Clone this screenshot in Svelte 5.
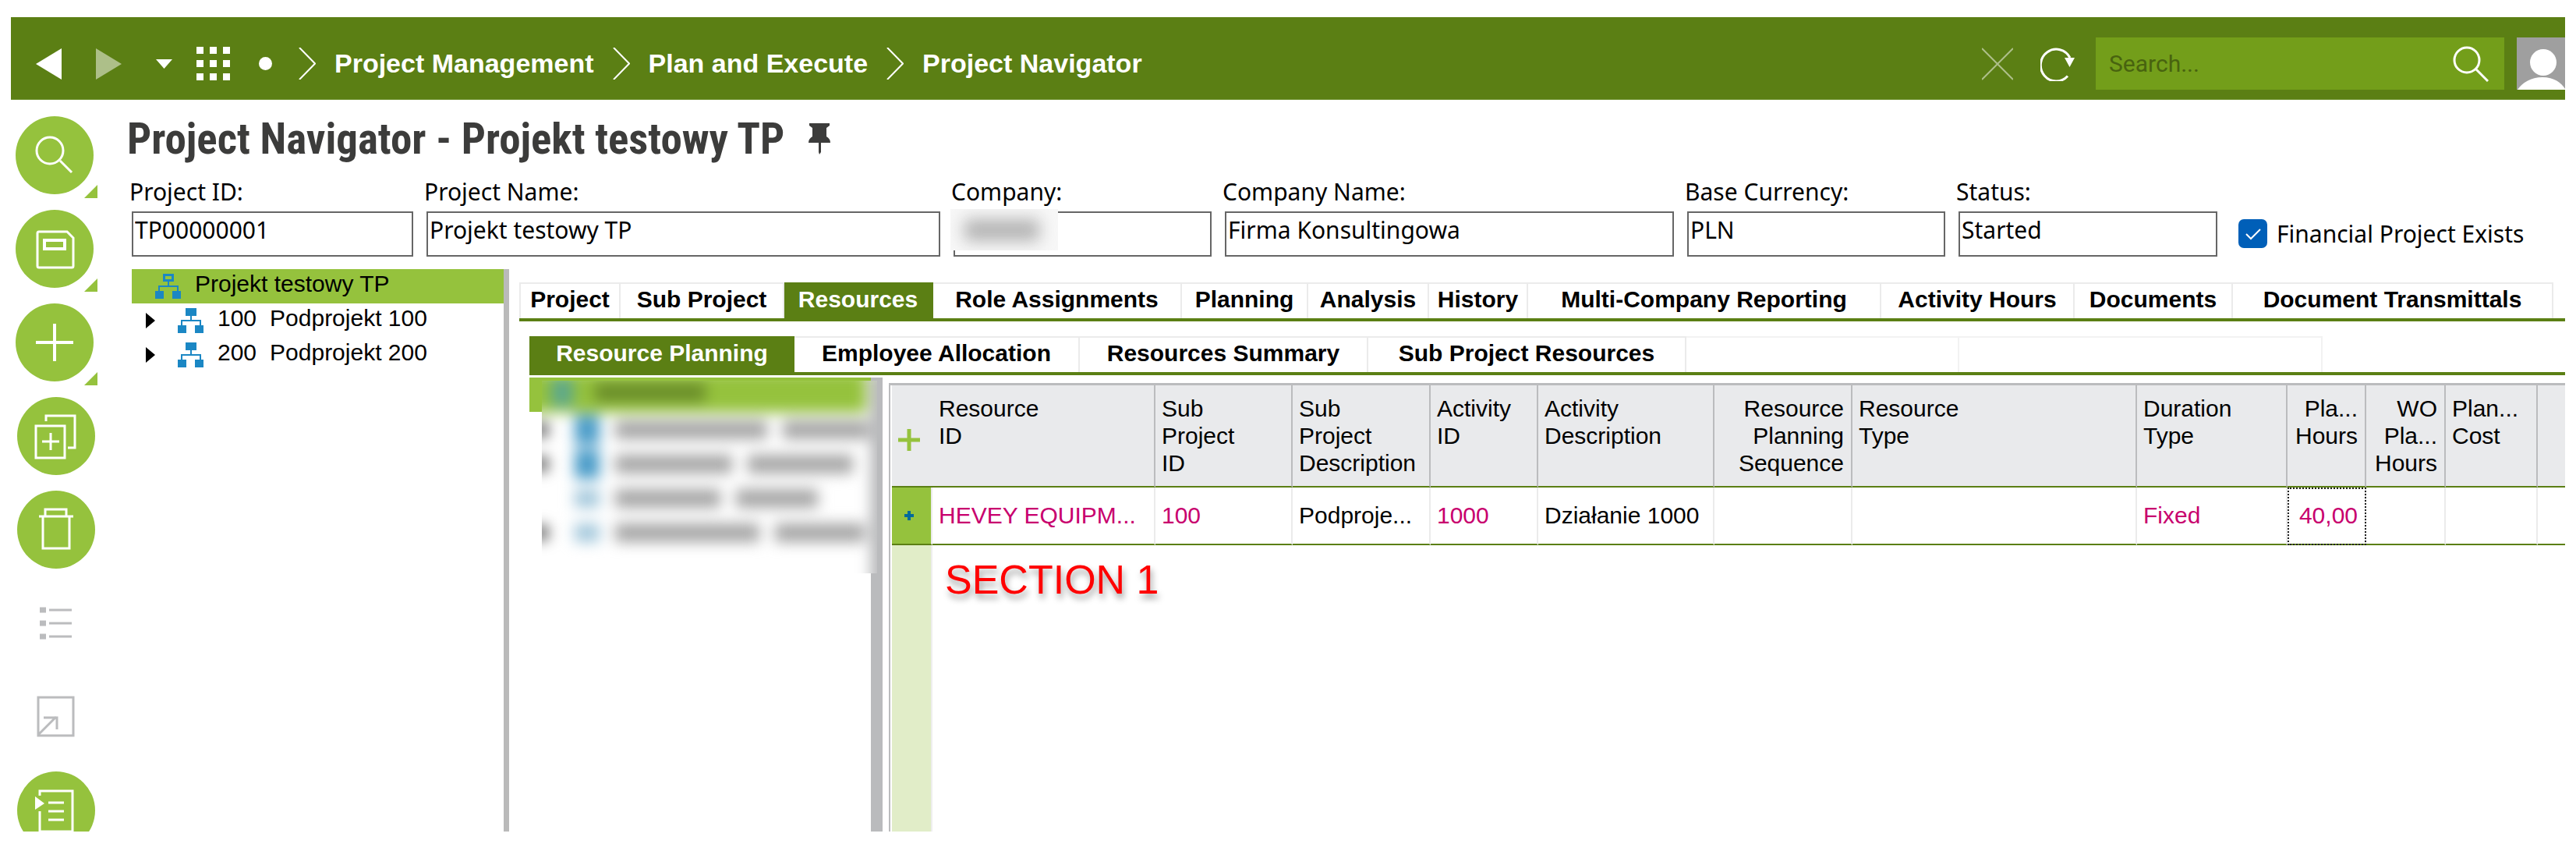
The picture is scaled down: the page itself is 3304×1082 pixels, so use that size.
<script lang="ts">
	interface Field {
		id: string;
		label: string;
		value: string;
		hidden?: boolean;
	}

	interface Tab {
		label: string;
		width: number;
	}

	interface Column {
		title: string[];
		width: number;
		value: string;
		align?: 'right';
		link?: boolean;
		focused?: boolean;
	}

	const crumbs = ['Project Management', 'Plan and Execute', 'Project Navigator'];

	const fields: Field[] = [
		{ id: 'project-id', label: 'Project ID:', value: 'TP00000001' },
		{ id: 'project-name', label: 'Project Name:', value: 'Projekt testowy TP' },
		{ id: 'company', label: 'Company:', value: '', hidden: true },
		{ id: 'company-name', label: 'Company Name:', value: 'Firma Konsultingowa' },
		{ id: 'currency', label: 'Base Currency:', value: 'PLN' },
		{ id: 'status', label: 'Status:', value: 'Started' }
	];

	const subProjects = [
		{ id: '100', name: 'Podprojekt 100' },
		{ id: '200', name: 'Podprojekt 200' }
	];

	const tabs: Tab[] = [
		{ label: 'Project', width: 130 },
		{ label: 'Sub Project', width: 210 },
		{ label: 'Resources', width: 191 },
		{ label: 'Role Assignments', width: 319 },
		{ label: 'Planning', width: 162 },
		{ label: 'Analysis', width: 155 },
		{ label: 'History', width: 127 },
		{ label: 'Multi-Company Reporting', width: 453 },
		{ label: 'Activity Hours', width: 248 },
		{ label: 'Documents', width: 203 },
		{ label: 'Document Transmittals', width: 411 }
	];

	const subTabs: Tab[] = [
		{ label: 'Resource Planning', width: 340 },
		{ label: 'Employee Allocation', width: 366 },
		{ label: 'Resources Summary', width: 370 },
		{ label: 'Sub Project Resources', width: 408 }
	];

	const columns: Column[] = [
		{ title: ['Resource', 'ID'], width: 286, value: 'HEVEY EQUIPM...', link: true },
		{ title: ['Sub', 'Project', 'ID'], width: 176, value: '100', link: true },
		{ title: ['Sub', 'Project', 'Description'], width: 177, value: 'Podproje...' },
		{ title: ['Activity', 'ID'], width: 138, value: '1000', link: true },
		{ title: ['Activity', 'Description'], width: 226, value: 'Działanie 1000' },
		{ title: ['Resource', 'Planning', 'Sequence'], width: 177, value: '', align: 'right' },
		{ title: ['Resource', 'Type'], width: 365, value: '' },
		{ title: ['Duration', 'Type'], width: 193, value: 'Fixed', link: true },
		{ title: ['Pla...', 'Hours'], width: 101, value: '40,00', align: 'right', link: true, focused: true },
		{ title: ['WO', 'Pla...', 'Hours'], width: 102, value: '', align: 'right' },
		{ title: ['Plan...', 'Cost'], width: 118, value: '' }
	];

	// widths of the masked id and name in each row of the resource tree
	const maskedRows = [
		{ arrow: true, person: true, id: 195, name: 110 },
		{ arrow: true, person: true, id: 150, name: 135 },
		{ arrow: false, person: false, id: 135, name: 105 },
		{ arrow: true, person: false, id: 185, name: 115 }
	];

	let activeTab = $state('Resources');
	let activeSubTab = $state('Resource Planning');
	let financial = $state(true);
</script>

{#snippet hierarchy(open: boolean)}
	<svg class="node-icon" width="34" height="34" viewBox="0 0 34 34" fill="#1b87c4" aria-hidden="true">
		{#if open}
			<path fill-rule="evenodd" d="M11 1h14v10H11zM14 4v4h8V4z" />
		{:else}
			<path d="M11 1h14v10H11z" />
		{/if}
		<path d="M17 11h2v5h12v7h-2v-5H7v5H5v-7h12z" />
		<path d="M1 23h11v10H1zM23 23h11v10H23z" />
	</svg>
{/snippet}

<div class="app">
	<header>
		<nav class="history">
			<button aria-label="Back"><svg width="33" height="40" viewBox="0 0 33 40"><path d="M33 0v40L0 20z" fill="#fff" /></svg></button>
			<button aria-label="Forward"><svg width="33" height="40" viewBox="0 0 33 40"><path d="M0 0v40l33-20z" fill="#adbf89" /></svg></button>
			<button aria-label="Recent pages"><svg width="21" height="12" viewBox="0 0 21 12"><path d="M0 0h21L10.500 12z" fill="#fff" /></svg></button>
		</nav>
		<button class="apps" aria-label="Navigator">
			<svg width="43" height="43" viewBox="0 0 43 43" fill="#fff">
				{#each [0, 17, 34] as y}
					{#each [0, 17, 34] as x}
						<rect {x} {y} width="9" height="9" />
					{/each}
				{/each}
			</svg>
		</button>
		<span class="dot"></span>
		<nav class="crumbs">
			{#each crumbs as crumb}
				<svg width="22" height="41" viewBox="0 0 22 41" fill="none" stroke="#fff" stroke-width="2"><path d="M1 0l20 20.500L1 41" /></svg>
				<a href="#top">{crumb}</a>
			{/each}
		</nav>
		<div class="tools">
			<button aria-label="Stop"><svg width="40" height="42" viewBox="0 0 40 42" fill="none" stroke="#adbf89" stroke-width="2"><path d="M0 1l40 40M40 1L0 41" /></svg></button>
			<button aria-label="Refresh">
				<svg width="44" height="44" viewBox="0 0 44 44" fill="none" stroke="#fff" stroke-width="3">
					<path d="M35 37.500A20 20.500 0 1 1 38 14" />
					<path d="M31 14h13l-6.500 12z" fill="#fff" stroke="none" />
				</svg>
			</button>
		</div>
		<div class="search">
			<input type="text" placeholder="Search..." aria-label="Search" />
			<button aria-label="Run search">
				<svg width="46" height="46" viewBox="0 0 46 46" fill="none" stroke="#fff" stroke-width="3"><circle cx="18" cy="18" r="16" /><path d="M29 29l16 16" /></svg>
			</button>
		</div>
		<div class="avatar">
			<svg width="62" height="67" viewBox="0 0 62 67" fill="#fff" aria-hidden="true"><circle cx="34" cy="32" r="17" /><path d="M1 67C7 58 18 51 33 51s24 7 29 15v1z" /></svg>
		</div>
	</header>

	<div class="body">
		<aside>
			<button class="round has-menu" aria-label="Search">
				<svg viewBox="0 0 100 100"><circle cx="44" cy="44" r="17" /><path d="M57 57l15 15" /></svg>
			</button>
			<button class="round has-menu" aria-label="Save">
				<svg viewBox="0 0 100 100"><path d="M30 28h36l8 8v36a2 2 0 0 1-2 2H30a2 2 0 0 1-2-2V30a2 2 0 0 1 2-2z" /><path d="M37 39h26v11H37z" stroke-width="4" /></svg>
			</button>
			<button class="round has-menu" aria-label="New">
				<svg viewBox="0 0 100 100"><path d="M26 50h48M50 26v48" stroke-width="4" /></svg>
			</button>
			<button class="round inset" aria-label="Duplicate">
				<svg viewBox="0 0 100 100"><path d="M24 37h37v41H24z" /><path d="M37 31v-7h37v41h-9M32 57h22M43 46v22" /></svg>
			</button>
			<button class="round inset" aria-label="Delete">
				<svg viewBox="0 0 100 100"><path d="M28 33h44M36 33v-9h27v9M33 33v41h34V33" /></svg>
			</button>
			<button class="plain" aria-label="List" disabled>
				<svg viewBox="0 0 100 100"><path d="M41 33h29M41 50h29M41 67h29" /><path d="M29 33h8M29 50h8M29 67h8" stroke-width="7" /></svg>
			</button>
			<button class="plain" aria-label="Open" disabled>
				<svg viewBox="0 0 100 100"><path d="M27 25h45v49H27zM27 73l23-23M34 51h17v15" /></svg>
			</button>
			<button class="round inset" aria-label="Details">
				<svg viewBox="0 0 100 100"><path d="M29 31v-6h42v52H29V51" /><path d="M40 40h20M40 51h20M40 62h20" /><path d="M23 32v17l12-8z" fill="#fff" stroke="none" /></svg>
			</button>
		</aside>

		<main>
			<h1>
				Project Navigator - Projekt testowy TP
				<svg width="30" height="40" viewBox="0 0 30 40" fill="#3c3c3b" aria-hidden="true"><path d="M2 0h26v3l-4 3v11c3 2 5 4 5 8H17v12l-2 3-1-3V25H1c0-4 2-6 5-8V6L2 3z" /></svg>
			</h1>

			<form class="fields">
				{#each fields as field (field.id)}
					<div class="field">
						<label for={field.id}>{field.label}</label>
						<input id={field.id} type="text" value={field.value} readonly />
						{#if field.hidden}
							<span class="mask"><i></i></span>
						{/if}
					</div>
				{/each}
				<label class="check">
					<input type="checkbox" bind:checked={financial} />
					Financial Project Exists
				</label>
			</form>

			<div class="panels">
				<div class="tree">
					<div class="tree-row selected">{@render hierarchy(true)}<span>Projekt testowy TP</span></div>
					{#each subProjects as sub (sub.id)}
						<div class="tree-row child">
							<svg class="arrow" width="12" height="20" viewBox="0 0 12 20" aria-hidden="true"><path d="M0 0l12 10L0 20z" /></svg>
							{@render hierarchy(false)}
							<span>{sub.id}</span>
							<span class="name">{sub.name}</span>
						</div>
					{/each}
				</div>

				<div class="workspace">
					<div class="tabs" role="tablist">
						{#each tabs as tab (tab.label)}
							<button
								role="tab"
								aria-selected={tab.label === activeTab}
								class:active={tab.label === activeTab}
								style="width:{tab.width}px"
								onclick={() => (activeTab = tab.label)}>{tab.label}</button>
						{/each}
					</div>

					<div class="inner">
						<div class="tabs" role="tablist">
							{#each subTabs as tab (tab.label)}
								<button
									role="tab"
									aria-selected={tab.label === activeSubTab}
									class:active={tab.label === activeSubTab}
									style="width:{tab.width}px"
									onclick={() => (activeSubTab = tab.label)}>{tab.label}</button>
							{/each}
							<span class="filler"></span>
							<span class="filler end"></span>
						</div>

						<div class="split">
							<div class="resource-tree">
								<div class="tree-row selected"></div>
								<div class="masked" aria-hidden="true">
									<div class="masked-body">
										<div class="masked-row top"><i class="roof"></i><i class="title"></i></div>
										{#each maskedRows as row}
											<div class="masked-row">
												<i class="tick" class:off={!row.arrow}></i>
												<i class="person" class:light={!row.person}></i>
												<i class="bar" style="width:{row.id}px"></i>
												<i class="bar" style="width:{row.name}px"></i>
											</div>
										{/each}
									</div>
								</div>
							</div>

							<div class="grid">
								<table>
									<colgroup>
										<col class="add-col" />
										{#each columns as col}
											<col style="width:{col.width}px" />
										{/each}
										<col />
									</colgroup>
									<thead>
										<tr>
											<th class="add"><button aria-label="Add row"><svg width="28" height="28" viewBox="0 0 28 28" stroke="#95c23d" stroke-width="5"><path d="M0 14h28M14 0v28" /></svg></button></th>
											{#each columns as col}
												<th class:right={col.align === 'right'}>
													{#each col.title as line}<span>{line}</span>{/each}
												</th>
											{/each}
											<th></th>
										</tr>
									</thead>
									<tbody>
										<tr>
											<td class="mark"><svg width="12" height="12" viewBox="0 0 12 12" stroke="#006a9c" stroke-width="4" aria-hidden="true"><path d="M0 6h12M6 0v12" /></svg></td>
											{#each columns as col}
												<td class:right={col.align === 'right'} class:link={col.link} class:focused={col.focused}>{col.value}</td>
											{/each}
											<td></td>
										</tr>
									</tbody>
								</table>
								<div class="rest">
									<div class="gutter"></div>
									<p>SECTION 1</p>
								</div>
							</div>
						</div>
					</div>
				</div>
			</div>
		</main>
	</div>
</div>

<style>
	:global(body) {
		background: #fff;
	}
	* {
		box-sizing: border-box;
	}
	.app {
		display: flex;
		flex-direction: column;
		height: 100vh;
		padding: 22px 14px 16px;
		overflow: hidden;
		background: #fff;
		color: #000;
		font-family: 'Liberation Sans', Arial, sans-serif;
		font-size: 30px;
	}
	svg {
		display: block;
		flex: none;
	}
	button {
		padding: 0;
		border: 0;
		background: none;
		font: inherit;
		color: inherit;
	}

	/* top bar */
	header {
		display: flex;
		flex: none;
		align-items: center;
		padding: 26px 0 12px 32px;
		border-bottom: 1px solid #6f9130;
		background: #5b7f14;
	}
	.history {
		display: flex;
		align-items: center;
		gap: 44px;
	}
	.apps {
		margin-left: 31px;
	}
	.dot {
		width: 17px;
		height: 17px;
		margin: 0 34px 0 37px;
		border-radius: 50%;
		background: #fff;
	}
	.crumbs {
		display: flex;
		align-items: center;
		gap: 24px;
	}
	.crumbs a {
		color: #fff;
		font-size: 34px;
		font-weight: bold;
		text-decoration: none;
		white-space: nowrap;
	}
	.tools {
		display: flex;
		align-items: center;
		gap: 35px;
		margin: 0 27px 0 auto;
	}
	.search {
		display: flex;
		align-items: center;
		width: 524px;
		height: 67px;
		padding: 0 20px 0 15px;
		background: #739e1a;
	}
	.search input {
		flex: 1;
		min-width: 0;
		border: 0;
		outline: 0;
		background: none;
		font: 30px Roboto, sans-serif;
	}
	.search input::placeholder {
		color: #48630f;
		opacity: 1;
	}
	.avatar {
		margin-left: 16px;
		background: #9f9f9f;
	}

	/* left button column */
	.body {
		display: flex;
		flex: 1;
		min-height: 0;
	}
	aside {
		display: flex;
		flex: none;
		flex-direction: column;
		gap: 20px;
		width: 155px;
		padding: 21px 0 0 6px;
		overflow: hidden;
	}
	aside button {
		position: relative;
		flex: none;
		width: 100px;
		height: 100px;
	}
	aside svg {
		width: 100px;
		height: 100px;
		fill: none;
		stroke: #fff;
		stroke-width: 3;
	}
	.round {
		border-radius: 50%;
		background: #95c23d;
	}
	.inset,
	.plain {
		margin-left: 2px;
	}
	.plain svg {
		stroke: #bbbcbe;
	}
	.has-menu::after {
		content: '';
		position: absolute;
		right: -5px;
		bottom: -5px;
		border-bottom: 17px solid #95c23d;
		border-left: 17px solid transparent;
	}

	/* title and header fields */
	main {
		display: flex;
		flex: 1;
		flex-direction: column;
		min-width: 0;
	}
	h1 {
		display: flex;
		align-items: center;
		gap: 30px;
		height: 100px;
		margin: 0 0 0 -6px;
		color: #3c3c3b;
		font-family: 'Franklin Gothic Demi Cond', 'Roboto Condensed', 'Open Sans Condensed', Lato, sans-serif;
		font-size: 55px;
		line-height: 64px;
		white-space: nowrap;
	}
	.fields {
		display: grid;
		grid-template-columns: 361px 659px 331px 576px 331px 332px auto;
		gap: 17px;
		font-family: 'Noto Sans', 'DejaVu Sans Condensed', sans-serif;
	}
	.field {
		position: relative;
		min-width: 0;
	}
	.field label {
		display: block;
		margin: 0 0 7px -3px;
		line-height: 36px;
	}
	.field input {
		display: block;
		width: 100%;
		height: 58px;
		padding: 0 0 12px 2px;
		border: 2px solid #666;
		outline: 0;
		background: #fff;
		font: inherit;
	}
	.mask {
		position: absolute;
		top: 40px;
		left: -4px;
		width: 138px;
		height: 53px;
		overflow: hidden;
		background: #f7f7f7;
	}
	.mask i {
		display: block;
		width: 96px;
		height: 28px;
		margin: 13px 0 0 18px;
		background: #b4b4b4;
		filter: blur(10px);
	}
	.check {
		display: flex;
		align-items: center;
		gap: 12px;
		margin: 46px 0 5px 10px;
		white-space: nowrap;
	}
	.check input {
		width: 37px;
		height: 37px;
		margin: 0;
		appearance: none;
		border: 2px solid #666;
		border-radius: 7px;
	}
	.check input:checked {
		border: 0;
		background: #005fb8
			url("data:image/svg+xml,%3Csvg xmlns='http://www.w3.org/2000/svg' viewBox='0 0 37 37' fill='none' stroke='white' stroke-width='2'%3E%3Cpath d='M10 19l6 6 12-12'/%3E%3C/svg%3E");
	}

	/* project tree */
	.panels {
		display: flex;
		flex: 1;
		min-height: 0;
		margin-top: 16px;
	}
	.tree {
		flex: none;
		width: 484px;
		border-right: 7px solid #bababa;
	}
	.tree-row {
		display: flex;
		align-items: center;
		height: 44px;
		padding-left: 29px;
		line-height: 34px;
		white-space: nowrap;
	}
	.tree-row span {
		margin-left: 18px;
		padding-bottom: 6px;
	}
	.tree-row .name {
		margin-left: 17px;
	}
	.selected {
		background: #95c23d;
	}
	.child {
		padding-left: 18px;
	}
	.arrow {
		margin-right: 28px;
	}

	/* tabs */
	.workspace {
		display: flex;
		flex: 1;
		flex-direction: column;
		min-width: 0;
		margin-left: 13px;
		padding-top: 17px;
	}
	.tabs {
		display: flex;
		flex: none;
		height: 50px;
		border-bottom: 4px solid #5b7f14;
	}
	.tabs button,
	.filler {
		flex: none;
		padding-bottom: 4px;
		border: solid #ebebeb;
		border-width: 2px 2px 0 0;
		font-weight: bold;
		white-space: nowrap;
	}
	.tabs button:first-child {
		border-left-width: 2px;
	}
	.tabs .active {
		border-color: #5b7f14;
		background: #5b7f14;
		color: #fff;
	}
	.filler {
		width: 350px;
		border-color: #f2f2f2;
	}
	.end {
		width: 466px;
	}

	.inner {
		display: flex;
		flex: 1;
		flex-direction: column;
		min-height: 0;
		margin: 19px 0 0 13px;
	}
	.split {
		display: flex;
		flex: 1;
		min-height: 0;
		padding-top: 3px;
	}

	/* resource tree, names masked */
	.resource-tree {
		position: relative;
		flex: none;
		width: 453px;
		border-right: 15px solid #babbbd;
	}
	.masked {
		position: absolute;
		top: 4px;
		left: 16px;
		width: 430px;
		height: 247px;
		overflow: hidden;
		background: #fff;
	}
	.masked-body {
		width: 460px;
		height: 290px;
		margin: -12px 0 0 -12px;
		padding-top: 12px;
		background: linear-gradient(90deg, transparent 432px, #b4b5b7 436px);
		filter: blur(9px);
	}
	.masked-row {
		display: flex;
		align-items: center;
		gap: 20px;
		height: 44px;
	}
	.top {
		gap: 28px;
		height: 53px;
		margin: -12px 32px 0 -20px;
		padding: 0 0 0 44px;
		background: #95c23d;
	}
	.roof {
		width: 28px;
		height: 36px;
		background: #5da88c;
	}
	.title {
		width: 142px;
		height: 24px;
		background: #6a8d2a;
	}
	.tick {
		flex: none;
		width: 20px;
		height: 18px;
		margin-right: 14px;
		background: #555;
	}
	.off {
		background: none;
	}
	.person {
		flex: none;
		width: 32px;
		height: 38px;
		background: #4a9cc8;
	}
	.light {
		height: 24px;
		background: #a4c8dc;
	}
	.bar {
		flex: none;
		height: 24px;
		background: #a6a6a6;
	}

	/* resource grid */
	.grid {
		display: flex;
		flex: 1;
		flex-direction: column;
		min-width: 0;
		margin: 7px 0 0 8px;
		border: solid #bbbcbe;
		border-width: 3px 0 0 2px;
		padding-left: 2px;
		background: #fff;
	}
	table {
		flex: none;
		width: 100%;
		table-layout: fixed;
		border-collapse: separate;
		border-spacing: 0;
	}
	.add-col {
		width: 52px;
	}
	th {
		height: 131px;
		padding: 12px 9px 10px 8px;
		border-right: 2px solid #bbbcbe;
		border-bottom: 2px solid #5b7f14;
		background: #e9eaec;
		font-weight: normal;
		line-height: 35px;
		text-align: left;
		vertical-align: top;
		white-space: nowrap;
	}
	th span {
		display: block;
	}
	th.add {
		padding: 56px 0 0 8px;
		border-right: 0;
	}
	td {
		height: 74px;
		padding: 0 9px 0 8px;
		border-right: 2px solid #ebebeb;
		border-bottom: 2px solid #5b7f14;
		white-space: nowrap;
	}
	th:last-child,
	td:last-child {
		border-right: 0;
	}
	.right {
		text-align: right;
	}
	.link {
		color: #c8006e;
	}
	.focused {
		outline: 2px dotted #222;
		outline-offset: -2px;
	}
	td.mark {
		padding: 0 0 0 16px;
		background: #95c23d;
	}
	.rest {
		display: flex;
		flex: 1;
		min-height: 0;
	}
	.gutter {
		width: 52px;
		border-right: 2px solid #eee;
		background: #e1edc8;
	}
	.rest p {
		margin: 14px 0 0 16px;
		color: #f00;
		font-size: 52px;
		line-height: 60px;
		text-shadow: 2px 6px 8px rgba(0, 0, 0, 0.4);
	}
</style>
